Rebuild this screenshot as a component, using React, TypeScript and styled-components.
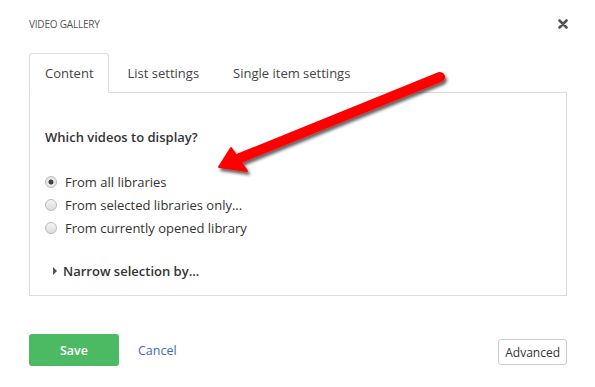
import React, { useState } from 'react';
import styled, { createGlobalStyle } from 'styled-components';

const GlobalStyle = createGlobalStyle`
  body {
    margin: 0;
    background: #fff;
    font-family: "Open Sans", "Liberation Sans", sans-serif;
    color: #333;
  }
`;

const tabs = ['Content', 'List settings', 'Single item settings'];
const options = ['From all libraries', 'From selected libraries only...', 'From currently opened library'];

const App: React.FC = () => {
  const [activeTab, setActiveTab] = useState('Content');
  const [choice, setChoice] = useState(options[0]);

  return (
    <Dialog>
      <GlobalStyle />
      <Header>
        <Title>VIDEO GALLERY</Title>
        <CloseButton aria-label="Close">
          <svg width="10" height="10" viewBox="0 0 10 10">
            <path d="M1.5 1.5 L8.5 8.5 M8.5 1.5 L1.5 8.5" stroke="#555" strokeWidth="2.6" strokeLinecap="round" />
          </svg>
        </CloseButton>
      </Header>
      <TabList>
        {tabs.map((tab) => (
          <Tab key={tab} active={activeTab === tab} onClick={() => setActiveTab(tab)}>
            {tab}
          </Tab>
        ))}
      </TabList>
      <Panel>
        <Question>Which videos to display?</Question>
        <Options>
          {options.map((option) => (
            <Option key={option}>
              <Radio checked={choice === option} onClick={() => setChoice(option)} />
              {option}
            </Option>
          ))}
        </Options>
        <Narrow>
          <Caret />
          Narrow selection by...
        </Narrow>
      </Panel>
      <Footer>
        <SaveButton>Save</SaveButton>
        <CancelLink href="#">Cancel</CancelLink>
        <AdvancedButton>Advanced</AdvancedButton>
      </Footer>
      <Arrow width="260" height="130" viewBox="0 0 260 130">
        <defs>
          <filter id="shadow" x="-20%" y="-20%" width="140%" height="140%">
            <feDropShadow dx="2" dy="3" stdDeviation="1.6" floodColor="#000" floodOpacity="0.6" />
          </filter>
        </defs>
        <g filter="url(#shadow)">
          <line x1="240" y1="17" x2="40" y2="98" stroke="#f00" strokeWidth="10" strokeLinecap="round" />
          <polygon points="19,107 31,88 47,111" fill="#f00" stroke="#f00" strokeWidth="2" strokeLinejoin="round" />
        </g>
      </Arrow>
    </Dialog>
  );
};

const Dialog = styled.div`
  position: relative;
  width: 595px;
  height: 387px;
  box-sizing: border-box;
  padding: 16px 29px 0 29px;
`;

const Header = styled.div`
  display: flex;
  justify-content: space-between;
  align-items: center;
  height: 16px;
`;

const Title = styled.h1`
  margin: 0;
  font-size: 10px;
  font-weight: 400;
  color: #555;
  letter-spacing: -0.2px;
`;

const CloseButton = styled.button`
  border: none;
  background: none;
  padding: 0;
  margin-right: -2px;
  display: flex;
  cursor: pointer;
`;

const TabList = styled.div`
  display: flex;
  align-items: flex-start;
  gap: 3px;
  margin-top: 21px;
  border-bottom: 1px solid #ddd;
  height: 39px;
  width: 538px;
`;

const Tab = styled.div<{ active: boolean }>`
  box-sizing: border-box;
  height: ${({ active }) => (active ? '40px' : '39px')};
  padding: 0 14px 0 15px;
  display: flex;
  align-items: center;
  font-size: 13px;
  color: #444;
  border: 1px solid ${({ active }) => (active ? '#ddd' : 'transparent')};
  border-bottom-color: ${({ active }) => (active ? '#fff' : 'transparent')};
  border-radius: 3px 3px 0 0;
  background: ${({ active }) => (active ? '#fff' : 'transparent')};
  cursor: pointer;
`;

const Panel = styled.div`
  box-sizing: border-box;
  width: 538px;
  height: 203px;
  border: 1px solid #ddd;
  border-top: none;
  padding: 34px 15px 0 15px;
`;

const Question = styled.div`
  font-size: 13px;
  font-weight: 600;
  color: #333;
  line-height: 20px;
`;

const Options = styled.div`
  margin-top: 25px;
  display: flex;
  flex-direction: column;
  gap: 3px;
`;

const Option = styled.label`
  display: flex;
  align-items: center;
  gap: 8px;
  font-size: 13px;
  color: #333;
  height: 20px;
`;

const Radio = styled.span<{ checked: boolean }>`
  box-sizing: border-box;
  width: 12px;
  height: 12px;
  border-radius: 50%;
  border: 1px solid #bbb;
  background: ${({ checked }) =>
    checked
      ? 'radial-gradient(circle, #444 0 2.2px, #e6e6e6 2.8px)'
      : 'linear-gradient(#f4f4f4, #dcdcdc)'};
  cursor: pointer;
`;

const Narrow = styled.div`
  display: flex;
  align-items: center;
  gap: 6px;
  margin-top: 24px;
  padding-left: 8px;
  font-size: 13px;
  font-weight: 600;
  color: #333;
`;

const Caret = styled.span`
  width: 0;
  height: 0;
  border-top: 4px solid transparent;
  border-bottom: 4px solid transparent;
  border-left: 4px solid #555;
`;

const Footer = styled.div`
  display: flex;
  align-items: center;
  margin-top: 38px;
  width: 538px;
`;

const SaveButton = styled.button`
  width: 90px;
  height: 32px;
  border: none;
  border-radius: 3px;
  background: #4cb963;
  color: #fff;
  font-family: inherit;
  font-size: 12.5px;
  font-weight: 600;
  cursor: pointer;
`;

const CancelLink = styled.a`
  margin-left: 19px;
  font-size: 12.5px;
  color: #3a6cc0;
  text-decoration: none;
`;

const AdvancedButton = styled.button`
  margin-left: auto;
  margin-top: 4px;
  height: 26px;
  padding: 0 6px;
  border: 1px solid #ccc;
  border-radius: 3px;
  background: #fff;
  color: #333;
  font-family: inherit;
  font-size: 12px;
  cursor: pointer;
`;

const Arrow = styled.svg`
  position: absolute;
  left: 200px;
  top: 60px;
  pointer-events: none;
`;

export default App;
